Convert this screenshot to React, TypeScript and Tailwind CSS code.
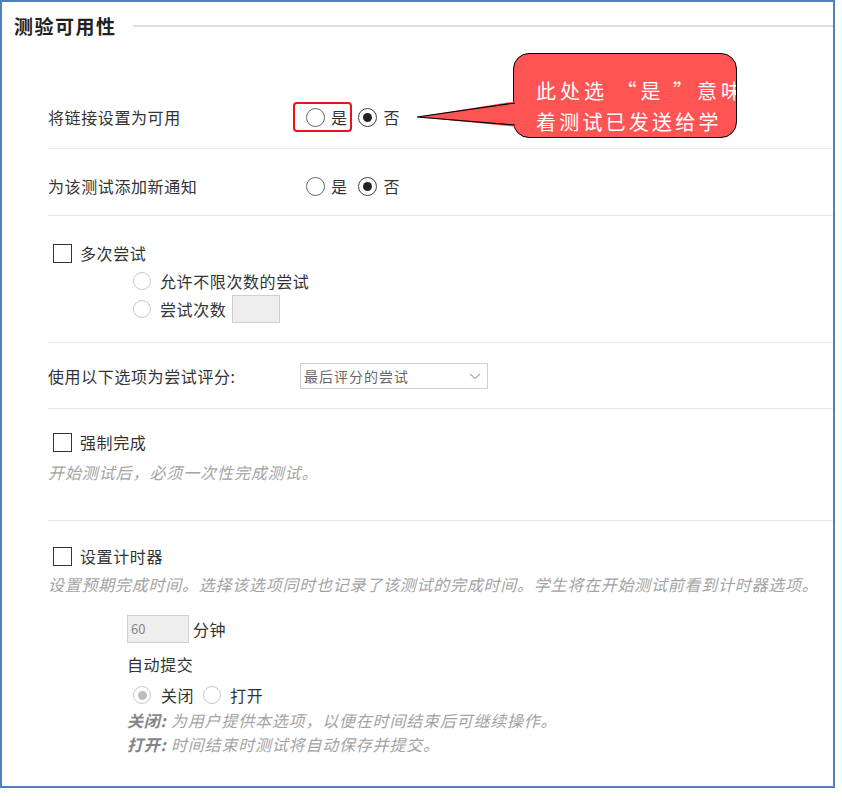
import type { ReactNode } from "react";

const sans = "font-['Noto_Sans_CJK_SC',sans-serif]";

function Radio({ checked = false, light = false, size = 19 }: { checked?: boolean; light?: boolean; size?: number }) {
  const ring = light ? "border-[#c8c8c8]" : checked ? "border-[#444]" : "border-[#666]";
  const dot = light ? "bg-[#bdbdbd]" : "bg-[#222]";
  return (
    <span
      className={`flex shrink-0 items-center justify-center rounded-full border-[1.5px] bg-white ${ring}`}
      style={{ width: size, height: size }}
    >
      {checked && <span className={`h-[9px] w-[9px] rounded-full ${dot}`} />}
    </span>
  );
}

function Checkbox() {
  return <span className="block h-[19px] w-[19px] shrink-0 border-[1.5px] border-[#333] bg-white" />;
}

function YesNo() {
  return (
    <div className="flex items-center">
      <Radio />
      <span className="ml-[6px]">是</span>
      <span className="ml-[10px]">
        <Radio checked />
      </span>
      <span className="ml-[7px]">否</span>
    </div>
  );
}

function Hint({ children }: { children: ReactNode }) {
  return <div className="h-[24px] italic leading-[24px] text-[#a3a3a3]">{children}</div>;
}

export default function App() {
  return (
    <div className={`h-[800px] w-[842px] bg-white ${sans}`}>
      <div className="relative h-[788px] w-[835px] overflow-hidden border-2 border-[#4f81bd] bg-white text-[16px] tracking-[0.6px] text-[#333]">
        {/* section title */}
        <div className="flex h-[48px] items-center">
          <span className="ml-[12px] text-[19px] font-bold tracking-[1.5px] text-[#222]">测验可用性</span>
          <div className="ml-[16px] h-[2px] flex-1 bg-[#dedede]" />
        </div>

        <div className="pl-[46px]">
          {/* make link available */}
          <div className="border-b border-[#e6e6e6] pb-[15px] pt-[51px]">
            <div className="flex h-[32px] items-center">
              <span className="w-[258px]">将链接设置为可用</span>
              <YesNo />
            </div>
          </div>

          {/* announcement */}
          <div className="border-b border-[#e6e6e6] pb-[13px] pt-[21px]">
            <div className="flex h-[32px] items-center">
              <span className="w-[258px]">为该测试添加新通知</span>
              <YesNo />
            </div>
          </div>

          {/* multiple attempts */}
          <div className="border-b border-[#e6e6e6] pb-[19px] pt-[23px]">
            <div className="flex h-[28px] items-center pl-[5px]">
              <Checkbox />
              <span className="ml-[8px]">多次尝试</span>
            </div>
            <div className="flex h-[28px] items-center pl-[85px]">
              <Radio light size={18} />
              <span className="ml-[9px]">允许不限次数的尝试</span>
            </div>
            <div className="flex h-[28px] items-center pl-[85px]">
              <Radio light size={18} />
              <span className="ml-[9px]">尝试次数</span>
              <span className="ml-[6px] h-[28px] w-[48px] border border-[#cfcfcf] bg-[#eeeeee]" />
            </div>
          </div>

          {/* score attempts */}
          <div className="border-b border-[#e6e6e6] pb-[19px] pt-[20px]">
            <div className="flex h-[26px] items-center">
              <span className="w-[252px]">使用以下选项为尝试评分:</span>
              <div className="flex h-[26px] w-[188px] items-center justify-between border border-[#cfcfcf] bg-white pl-[3px] pr-[6px] text-[14px] tracking-[1px] text-[#666]">
                <span>最后评分的尝试</span>
                <svg width="12" height="7" viewBox="0 0 12 7" fill="none">
                  <path d="M1 1l5 4.5L11 1" stroke="#aaa" strokeWidth="1.1" />
                </svg>
              </div>
            </div>
          </div>

          {/* force completion */}
          <div className="border-b border-[#e6e6e6] pb-[36px] pt-[21px]">
            <div className="flex h-[24px] items-center pl-[5px]">
              <Checkbox />
              <span className="ml-[8px]">强制完成</span>
            </div>
            <div className="mt-[6px] tracking-[0.9px]">
              <Hint>开始测试后，必须一次性完成测试。</Hint>
            </div>
          </div>

          {/* timer */}
          <div className="pt-[23px]">
            <div className="flex h-[24px] items-center pl-[5px]">
              <Checkbox />
              <span className="ml-[8px]">设置计时器</span>
            </div>
            <div className="mt-[4px] whitespace-nowrap tracking-[0.75px]">
              <Hint>设置预期完成时间。选择该选项同时也记录了该测试的完成时间。学生将在开始测试前看到计时器选项。</Hint>
            </div>

            <div className="pl-[79px]">
              <div className="mt-[19px] flex h-[28px] items-center">
                <span className="flex h-[28px] w-[62px] items-center border border-[#cfcfcf] bg-[#eeeeee] pl-[3px] text-[13px] tracking-normal text-[#888]">
                  60
                </span>
                <span className="ml-[4px]">分钟</span>
              </div>
              <div className="mt-[9px] h-[24px] leading-[24px]">自动提交</div>
              <div className="mt-[7px] flex h-[24px] items-center pl-[6px]">
                <Radio light checked size={18} />
                <span className="ml-[10px]">关闭</span>
                <span className="ml-[9px]">
                  <Radio light size={18} />
                </span>
                <span className="ml-[9px]">打开</span>
              </div>
              <div className="mt-[1px] tracking-[0.8px]">
                <Hint>
                  <b className="text-[#858585]">关闭:</b> 为用户提供本选项，以便在时间结束后可继续操作。
                </Hint>
                <Hint>
                  <b className="text-[#858585]">打开:</b> 时间结束时测试将自动保存并提交。
                </Hint>
              </div>
            </div>
          </div>
        </div>

        {/* highlight around "是" */}
        <div className="absolute left-[291px] top-[100px] h-[30px] w-[59px] rounded-[4px] border-2 border-[#e8141b]" />

        {/* callout bubble */}
        <div className="absolute left-[511px] top-[51px] h-[85px] w-[224px] overflow-hidden rounded-[16px] border border-black bg-[#ff5454] pl-[22px] pt-[21px] text-[20px] leading-[31px] text-white">
          <div className="whitespace-nowrap tracking-[4px]">此处选 “是 ”意味</div>
          <div className="whitespace-nowrap tracking-[3.2px]">着测试已发送给学</div>
        </div>
        <svg className="absolute left-[408px] top-[93px]" width="110" height="40" viewBox="0 0 110 40">
          <polygon points="7,22 107,6 107,32" fill="#ff5454" />
          <polyline points="105,8 7,22 105,30" fill="none" stroke="#000" strokeWidth="1.2" />
        </svg>
      </div>
    </div>
  );
}
